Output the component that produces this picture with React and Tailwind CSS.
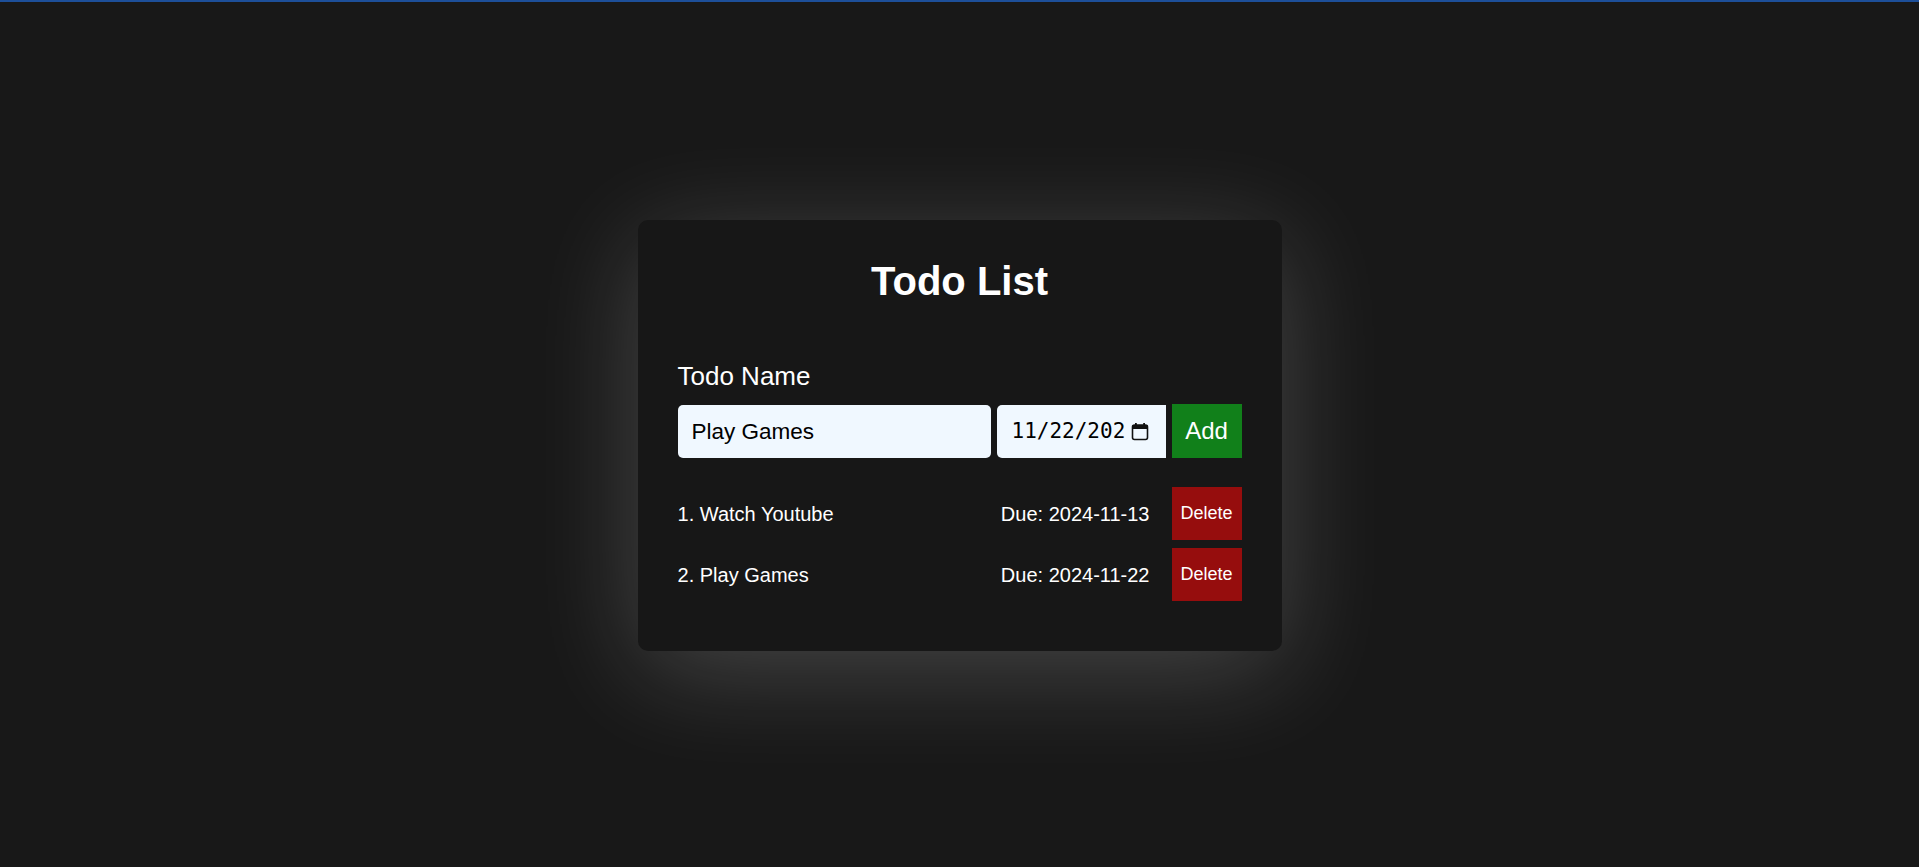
import { useState } from "react";

const font = { fontFamily: '"Liberation Sans", Arial, sans-serif' };

function CalendarIcon() {
    return (
        <svg width="18" height="19" viewBox="0 0 18 19" fill="none">
            <rect x="1.5" y="3" width="15" height="14.5" rx="2" stroke="#111" strokeWidth="1.6" />
            <rect x="1.5" y="3" width="15" height="4" fill="#111" />
            <rect x="4" y="1" width="1.8" height="3" fill="#111" />
            <rect x="12.2" y="1" width="1.8" height="3" fill="#111" />
        </svg>
    );
}

export default function App() {
    const [name, setName] = useState("Play Games");
    const [todos, setTodos] = useState([
        { name: "Watch Youtube", due: "2024-11-13" },
        { name: "Play Games", due: "2024-11-22" },
    ]);

    const handleAdd = () => {
        if (!name.trim()) return;
        setTodos([...todos, { name, due: "2024-11-22" }]);
    };

    const handleDelete = index => {
        setTodos(todos.filter((_, i) => i !== index));
    };

    return (
        <div className='h-screen overflow-hidden bg-[#181818] flex flex-col' style={font}>
            <div className='h-[2px] bg-[#1d4f99]'></div>
            <div className='flex justify-center pt-[218px]'>
                <div className='w-[644px] bg-[#171717] rounded-[10px] px-[40px] pt-[41px] pb-[50px] shadow-[0_20px_110px_rgba(255,255,255,0.2)]'>
                    <h1 className='text-center text-white font-bold text-[40px] leading-[40px]'>Todo List</h1>

                    <p className='text-white text-[26px] leading-[26px] mt-[62px]'>Todo Name</p>

                    <div className='flex items-end gap-[6px] mt-[15px] h-[54px]'>
                        <input
                            type='text'
                            className='w-[313px] h-[53px] bg-[#f0f8ff] rounded-[5px] px-[14px] text-[22.5px] text-black outline-none'
                            style={font}
                            value={name}
                            onChange={e => setName(e.target.value)}
                        />
                        <div className='w-[169px] h-[53px] bg-[#f0f8ff] rounded-l-[5px] flex items-center pl-[15px] pr-[17px] overflow-hidden'>
                            <span className='text-black text-[21px] whitespace-nowrap overflow-hidden flex-1' style={{ fontFamily: '"DejaVu Sans Mono", "Liberation Mono", monospace' }}>
                                11/22/202
                            </span>
                            <CalendarIcon />
                        </div>
                        <button
                            type='button'
                            onClick={handleAdd}
                            className='w-[70px] h-[54px] bg-[#11801a] text-white text-[24px] cursor-pointer'
                        >
                            Add
                        </button>
                    </div>

                    <div className='flex flex-col gap-[8px] mt-[29px]'>
                        {todos.map((todo, i) => (
                            <div key={i} className='flex items-center h-[53px]'>
                                <span className='flex-1 text-white text-[20px]'>{i + 1}. {todo.name}</span>
                                <span className='text-white text-[20px] mr-[22px]'>Due: {todo.due}</span>
                                <button
                                    type='button'
                                    onClick={() => handleDelete(i)}
                                    className='w-[70px] h-[53px] bg-[#960d0d] text-white text-[18px] cursor-pointer'
                                >
                                    Delete
                                </button>
                            </div>
                        ))}
                    </div>
                </div>
            </div>
        </div>
    );
}
